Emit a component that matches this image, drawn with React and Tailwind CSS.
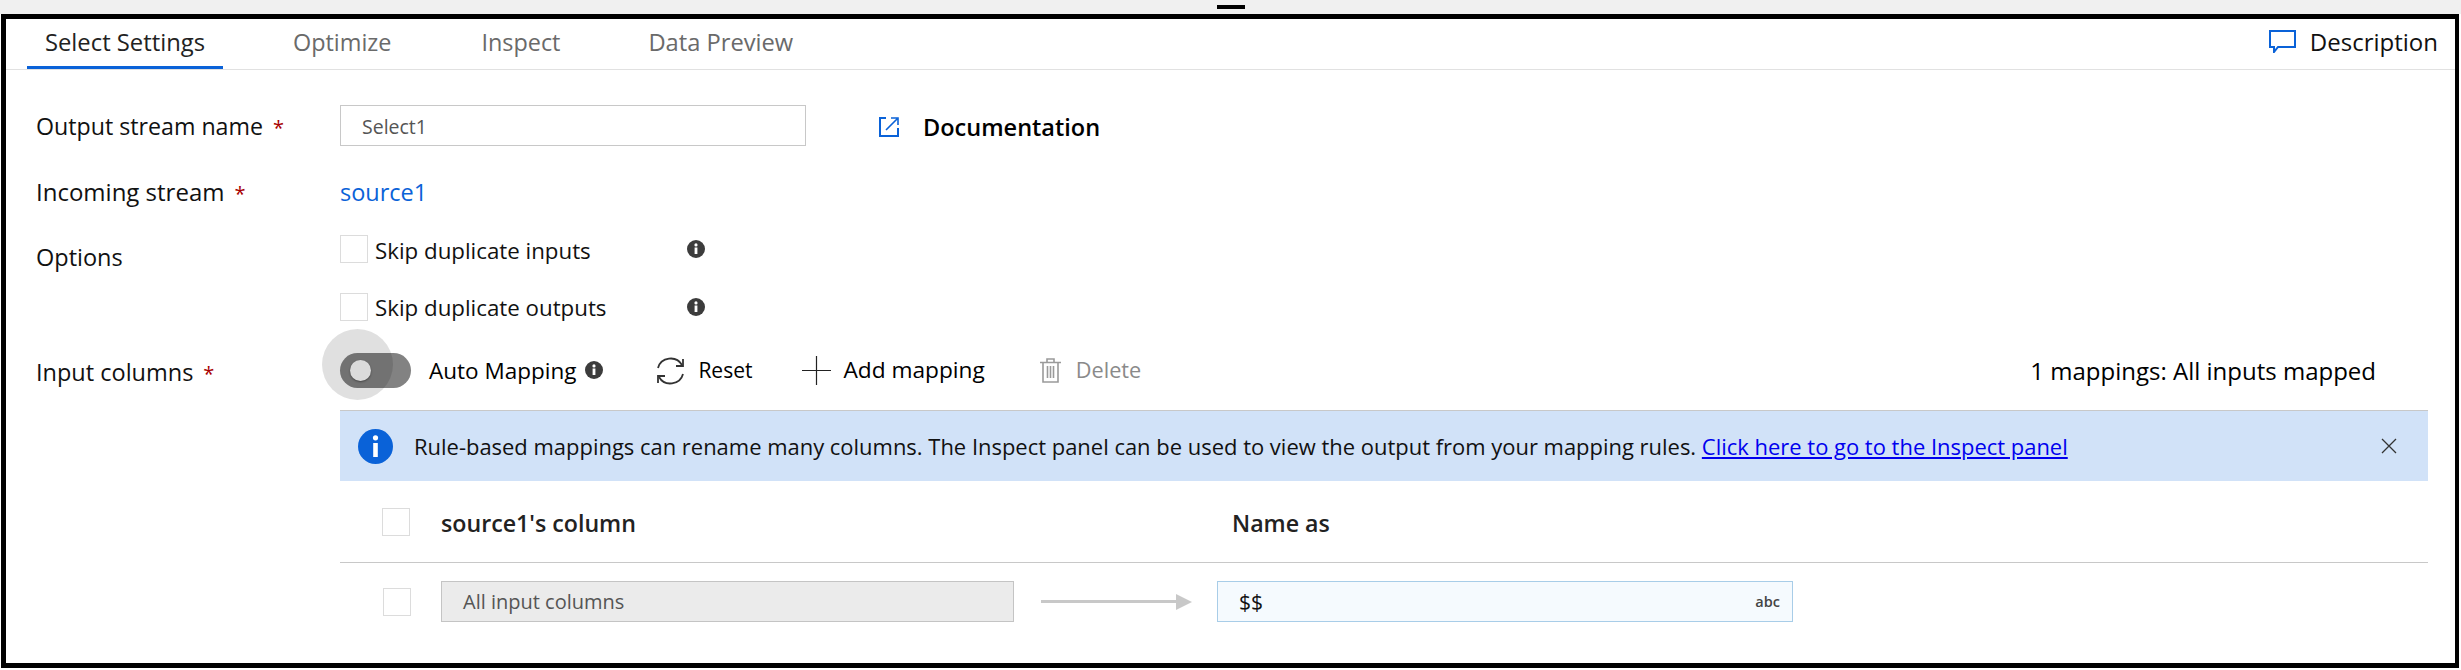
import React from 'react';

const font = "font-['Open_Sans',sans-serif]";

const Checkbox = ({ className = '' }) => (
  <div className={`w-[28px] h-[28px] border border-[#dcdcdc] bg-white shrink-0 ${className}`} />
);

const Required = () => <span className="text-[#a80000] ml-[10px] text-[20px]">*</span>;

const InfoDot = ({ className = '' }) => (
  <svg viewBox="0 0 18 18" className={`w-[18px] h-[18px] shrink-0 ${className}`}>
    <circle cx="9" cy="9" r="9" fill="#3c3c3c" />
    <rect x="7.6" y="7.5" width="2.8" height="6.5" fill="#fff" />
    <circle cx="9" cy="4.9" r="1.6" fill="#fff" />
  </svg>
);

const Field = ({ label, required, children, className = '', labelClass = '' }) => (
  <div className={`flex ${className}`}>
    <div className={`w-[304px] shrink-0 text-[#111] ${labelClass}`}>
      {label}
      {required && <Required />}
    </div>
    {children}
  </div>
);

const App = () => {
  return (
    <div className={`w-[2461px] h-[670px] flex flex-col bg-white overflow-hidden ${font}`}>
      {/* Strip above the frame */}
      <div className="h-[14px] bg-[#f0f0f0] flex justify-center pt-[5px] shrink-0">
        <div className="w-[28px] h-[4px] bg-black" />
      </div>

      <div className="h-[654px] ml-[1px] mr-[2px] border-l-[5px] border-r-[4px] border-t-[5px] border-b-[5px] border-black flex flex-col">
        {/* Tabs */}
        <div className="h-[51px] border-b border-[#e1e1e1] flex items-start pl-[21px] pr-[17px] shrink-0">
          <div className="h-[50px] w-[196px] border-b-[3px] border-[#0a62d8] text-center text-[23.8px] leading-[46px] text-[#222]">
            Select Settings
          </div>
          <div className="ml-[70px] text-[23.4px] leading-[46px] text-[#6a6a6a]">Optimize</div>
          <div className="ml-[90px] text-[23.4px] leading-[46px] text-[#6a6a6a]">Inspect</div>
          <div className="ml-[88px] text-[23.7px] leading-[46px] text-[#6a6a6a]">Data Preview</div>
          <div className="ml-auto flex items-start h-[46px] gap-[14px] text-[24px] leading-[46px] text-[#111]">
            <svg viewBox="0 0 27 23" className="w-[27px] h-[23px] mt-[11px]" fill="none" stroke="#0a62d8" strokeWidth="2">
              <path d="M1 1H26V17H9L5 22V17H1Z" />
            </svg>
            Description
          </div>
        </div>

        <div className="pl-[30px] pr-[27px] flex flex-col">
          {/* Output stream name */}
          <Field label="Output stream name" required className="mt-[35px] h-[41px] items-center" labelClass="text-[23.2px] leading-[40px] pt-[3px]">
            <div className="w-[466px] h-[41px] border border-[#c8c8c8] pl-[21px] pt-[2px] flex items-center text-[19.5px] text-[#555]">
              Select1
            </div>
            <svg viewBox="0 0 20 20" className="ml-[73px] w-[20px] h-[20px] mt-[2px]" fill="none" stroke="#0a62d8" strokeWidth="2">
              <path d="M7 1H1V19H19V11" />
              <path d="M7 13L18 2M12 1H19V8" strokeWidth="1.6" />
            </svg>
            <div className="ml-[24px] text-[23.5px] font-semibold text-black leading-[40px] pt-[3px]">Documentation</div>
          </Field>

          {/* Incoming stream */}
          <Field label="Incoming stream" required className="mt-[26px] h-[40px]" labelClass="text-[24px] leading-[40px]">
            <div className="text-[23.5px] leading-[40px] text-[#0a62d8]">source1</div>
          </Field>

          {/* Options */}
          <div className="flex mt-[23px]">
            <div className="w-[304px] shrink-0 text-[23.5px] text-[#111] leading-[44px]">Options</div>
            <div className="flex flex-col gap-[30px]">
              <div className="flex items-center h-[28px]">
                <Checkbox />
                <div className="ml-[7px] w-[312px] text-[22.3px] leading-[28px] pt-[3px] text-[#111]">Skip duplicate inputs</div>
                <InfoDot className="-mt-[1px]" />
              </div>
              <div className="flex items-center h-[28px]">
                <Checkbox />
                <div className="ml-[7px] w-[312px] text-[22.3px] leading-[28px] pt-[2px] text-[#111]">Skip duplicate outputs</div>
                <InfoDot className="-mt-[1px]" />
              </div>
            </div>
          </div>

          {/* Input columns */}
          <Field label="Input columns" required className="mt-[32px] h-[35px]" labelClass="text-[23.5px] leading-[38px]">
            <div className="flex-1 flex items-center">
              <div className="relative w-[71px] h-[35px] rounded-full bg-[#828282] shrink-0">
                <div className="absolute left-[10px] top-[7px] w-[21px] h-[21px] rounded-full bg-[#fafafa] shadow-[0_1px_2px_rgba(0,0,0,0.4)]" />
                <div className="absolute left-[-18px] top-[-24px] w-[71px] h-[71px] rounded-full bg-black/12" />
              </div>
              <div className="ml-[18px] text-[22.5px] text-black">Auto Mapping</div>
              <InfoDot className="ml-[9px] -mt-[2px]" />
              <svg viewBox="0 0 29 28" className="ml-[53px] w-[29px] h-[28px]" fill="none" stroke="#333" strokeWidth="1.8">
                <path d="M2 11A13 12.5 0 0 1 26 8" />
                <path d="M27 2V9H20" />
                <path d="M27 17A13 12.5 0 0 1 3 20" />
                <path d="M2 26V19H9" />
              </svg>
              <div className="ml-[13px] text-[21px] text-black">Reset</div>
              <svg viewBox="0 0 29 29" className="ml-[50px] w-[29px] h-[29px]" fill="none" stroke="#222" strokeWidth="1.2">
                <path d="M14.5 0V29M0 14.5H29" />
              </svg>
              <div className="ml-[12px] text-[22.7px] text-black">Add mapping</div>
              <svg viewBox="0 0 21 25" className="ml-[55px] w-[21px] h-[25px]" fill="none" stroke="#9a9a9a" strokeWidth="1.6">
                <path d="M0 4.5H21M7 4V1H14V4M3 4.5V24H18V4.5M7.5 8V20M10.5 8V20M13.5 8V20" />
              </svg>
              <div className="ml-[15px] text-[21.7px] text-[#8a8a8a]">Delete</div>
              <div className="ml-auto mr-[52px] text-[24px] text-black">1 mappings: All inputs mapped</div>
            </div>
          </Field>

          <div className="ml-[304px] flex flex-col">
            {/* Info banner */}
            <div className="mt-[22px] h-[71px] bg-[#d1e2f8] border-t border-[#c8c8c8] flex items-center pl-[18px] pr-[31px] text-[21.96px] text-[#111]">
              <svg viewBox="0 0 35 35" className="w-[35px] h-[35px] shrink-0">
                <circle cx="17.5" cy="17.5" r="17.5" fill="#0a62d8" />
                <rect x="15.2" y="14" width="4.6" height="14" fill="#fff" />
                <circle cx="17.5" cy="8.8" r="2.6" fill="#fff" />
              </svg>
              <div className="ml-[21px] pt-[2px]">
                Rule-based mappings can rename many columns. The Inspect panel can be used to view the output from your mapping rules.{' '}
                <a href="#" className="text-[#0000ee] underline">Click here to go to the Inspect panel</a>
              </div>
              <svg viewBox="0 0 16 16" className="ml-auto w-[16px] h-[16px] shrink-0" fill="none" stroke="#333" strokeWidth="1.3">
                <path d="M1 1L15 15M15 1L1 15" />
              </svg>
            </div>

            {/* Column header */}
            <div className="h-[82px] border-b border-[#c8c8c8] flex items-center text-[23.2px] font-semibold text-[#222]">
              <Checkbox className="ml-[42px]" />
              <div className="ml-[31px] w-[791px] pt-[4px]">source1's column</div>
              <div className="pt-[4px]">Name as</div>
            </div>

            {/* Mapping row */}
            <div className="mt-[18px] h-[41px] flex items-center">
              <Checkbox className="ml-[43px]" />
              <div className="ml-[30px] w-[573px] h-[41px] bg-[#ebebeb] border border-[#c4c4c4] pl-[21px] flex items-center text-[20px] text-[#555]">
                All input columns
              </div>
              <div className="ml-[27px] flex items-center">
                <div className="w-[135px] h-[3px] bg-[#c8c8c8]" />
                <div className="w-0 h-0 border-y-[8px] border-y-transparent border-l-[16px] border-l-[#c8c8c8]" />
              </div>
              <div className="ml-[25px] w-[576px] h-[41px] bg-[#f5fafe] border border-[#a8cde8] pl-[21px] pr-[12px] flex items-center justify-between">
                <span className="text-[21px] text-[#111] pt-[2px]">$$</span>
                <span className="text-[14.5px] font-semibold text-[#444]">abc</span>
              </div>
            </div>
          </div>
        </div>
      </div>
    </div>
  );
};

export default App;
